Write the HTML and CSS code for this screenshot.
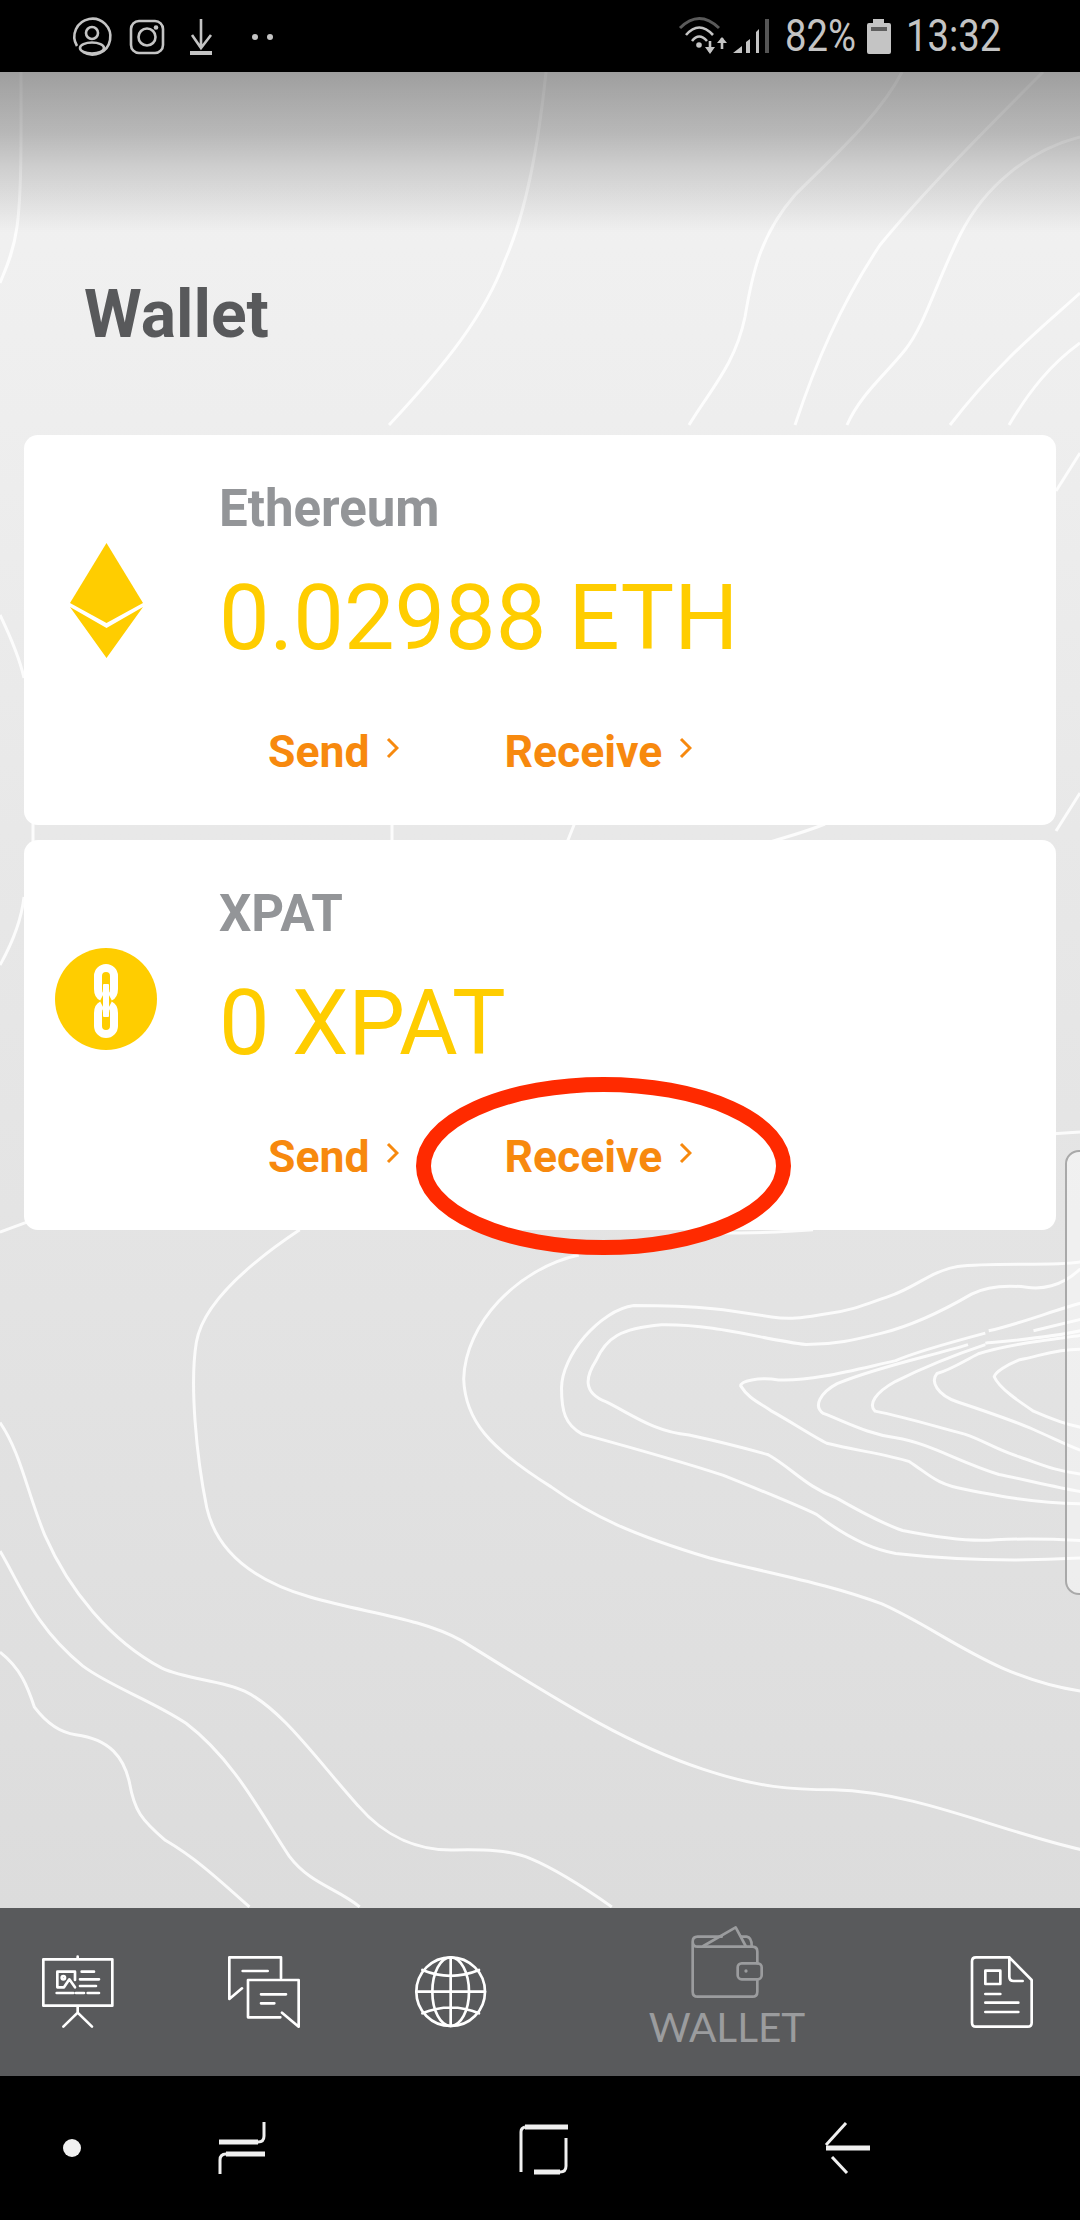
FILE: index.html
```html
<!DOCTYPE html>
<html lang="en">
<head>
    <meta charset="UTF-8">
    <title>Wallet</title>
    <link rel="stylesheet" href="styles.css">
</head>
<body>
<div class="phone">

    <!-- status bar -->
    <div class="status-bar">
        <svg class="status-left" viewBox="0 0 280 72" width="280" height="72">
            <g class="st-line">
                <path d="M77 46 A18 18 0 1 1 83 52"/>
                <circle cx="92" cy="33" r="6"/>
                <ellipse cx="92" cy="48" rx="12" ry="5.5"/>
                <rect x="131" y="21" width="32" height="32" rx="8"/>
                <circle cx="147" cy="37" r="8.5"/>
                <path d="M201 19 V48 M192 35 L201 48 L211 35"/>
            </g>
            <g class="st-fill">
                <circle cx="156" cy="27.500" r="2.300"/>
                <rect x="190" y="51" width="22" height="4"/>
                <circle cx="255" cy="37" r="3"/>
                <circle cx="270" cy="37" r="3"/>
            </g>
        </svg>
        <div class="status-right">
            <svg viewBox="0 0 100 72" width="100" height="72">
                <path class="st-dim" d="M20 28 Q39 9 59 28"/>
                <path class="st-line" d="M26 35 Q39 20 53 35 M32 41 Q39 32 47 41"/>
                <circle class="st-fill" cx="39" cy="45" r="2.800"/>
                <path class="st-line" d="M50 41 V52 M62 49 V38"/>
                <path class="st-fill" d="M45 47 H55 L50 54 Z M57 43 L62 37 L67 43 Z"/>
                <path class="st-fill" d="M73 53 L82 46 V53 Z M86 42 L90 39 V53 H86 Z M96 32 L99 29 V53 H96 Z"/>
            </svg>
            <span class="signal-end"></span>
            <span class="status-text pct">82%</span>
            <svg class="battery" viewBox="0 0 24 35" width="24" height="35">
                <path class="st-fill" d="M6 0 H17 V4 H22 Q24 4 24 6 V33 Q24 35 22 35 H2 Q0 35 0 33 V6 Q0 4 2 4 H6 Z"/>
                <rect class="battery-band" x="4" y="8" width="16" height="4"/>
            </svg>
            <span class="status-text clock">13:32</span>
        </div>
    </div>

    <div class="content">
        <!-- topographic lines behind everything -->
        <svg class="topo" viewBox="0 72 1080 1836" width="1080" height="1836">
            <path d="M21 72 C21 130 22 190 17 227 C13 255 5 270 0 283"/>
            <path d="M546 72 C538 150 525 215 505 260 C485 315 445 365 389 425"/>
            <path d="M902 72 C880 115 835 155 795 195 C760 235 752 275 745 317 C735 365 710 390 689 425"/>
            <path d="M1043 72 C990 125 925 190 880 245 C840 305 815 365 795 425"/>
            <path d="M1080 137 C1030 150 985 185 960 235 C935 285 925 325 905 350 C885 375 860 395 847 425"/>
            <path d="M1080 293 C1045 325 1000 360 950 425"/>
            <path d="M1080 343 C1050 365 1030 390 1009 425"/>
            <path d="M1080 453 L1056 491"/>
            <path d="M1080 793 L1056 831"/>
            <path d="M0 615 C12 640 20 660 24 678"/>
            <path d="M33 820 V845"/>
            <path d="M392 820 V845"/>
            <path d="M576 820 L566 845"/>
            <path d="M825 824 C805 832 790 836 770 842"/>
            <path d="M24 897 C22 915 14 940 0 965"/>
            <path d="M1080 1132 L1050 1134"/>
            <g transform="translate(0 1200) scale(.689 .459)">
                <path d="M0 70 L45 45"/>
                <path d="M1040 72 C1100 72 1140 70 1180 65"/>
                <path d="M435 65 C370 130 295 220 285 310 C275 400 285 560 300 670 C315 770 370 830 450 865 C530 900 610 910 670 960 C800 1080 900 1180 1020 1240 C1100 1280 1150 1285 1210 1285 C1330 1290 1440 1370 1568 1415"/>
                <path d="M840 120 C750 150 675 270 673 390 C675 480 710 540 800 625 C860 690 920 730 1030 780 C1120 815 1200 835 1280 880 C1370 940 1440 1040 1568 1070"/>
                <path d="M1568 135 C1530 145 1440 135 1390 145 C1350 155 1330 190 1290 210 C1260 225 1240 240 1200 248 C1170 255 1150 262 1120 255 C1060 240 1020 230 920 230 C870 240 815 340 815 410 C815 460 820 490 845 510 C930 545 1000 575 1050 600 C1100 630 1150 660 1185 685 C1220 725 1260 760 1300 770 C1360 780 1450 790 1568 780"/>
                <path d="M1568 150 C1540 190 1510 195 1490 190 C1460 185 1430 190 1410 205 C1370 240 1320 275 1280 290 C1240 305 1210 315 1170 315 C1110 305 1040 270 960 272 C900 280 880 300 865 350 C850 385 845 420 880 440 C920 470 950 505 1000 512 C1040 525 1080 540 1115 555 C1150 585 1170 625 1215 650 C1250 680 1290 710 1310 720 C1360 735 1410 745 1445 740 C1480 738 1520 738 1568 742"/>
                <path d="M1430 290 C1380 310 1330 330 1300 350 C1240 370 1180 395 1130 392 C1100 385 1075 395 1075 405 C1085 430 1100 440 1120 460 C1150 485 1180 515 1200 530 C1240 545 1290 555 1320 570 C1350 600 1360 620 1400 630 C1450 645 1500 660 1568 662"/>
                <path d="M1405 315 C1350 340 1270 365 1215 400 C1190 420 1180 450 1195 465 C1230 485 1260 510 1300 518 C1350 530 1390 570 1450 598 C1490 610 1530 625 1568 635"/>
                <path d="M1430 315 C1380 340 1340 365 1300 395 C1270 420 1260 445 1270 460 C1320 475 1360 495 1400 510 C1430 525 1440 540 1480 560 C1510 575 1530 590 1568 597"/>
                <path d="M1568 295 C1520 305 1460 315 1420 335 C1400 350 1380 370 1360 378 C1350 395 1360 425 1390 440 C1430 460 1470 480 1500 500 C1530 520 1550 535 1568 545"/>
                <path d="M1568 325 C1530 325 1510 340 1480 348 C1460 360 1445 375 1443 385 C1450 410 1480 440 1500 460 C1530 480 1550 490 1568 495"/>
                <path d="M1500 285 L1568 260 M1435 285 C1480 270 1530 240 1568 225 M1430 312 C1480 305 1520 300 1568 285"/>
                <path d="M0 485 C30 550 40 640 65 730 C100 850 160 960 235 1020 C270 1045 320 1045 355 1070 C410 1110 460 1220 520 1320 C560 1390 610 1418 660 1416 C700 1415 740 1415 770 1435 C810 1460 850 1500 888 1540"/>
                <path d="M0 765 C30 840 50 930 120 1015 C160 1060 220 1090 270 1140 C340 1220 380 1340 420 1430 C450 1490 490 1500 522 1540"/>
                <path d="M0 985 C30 1020 40 1060 50 1105 C65 1135 85 1160 110 1165 C160 1175 180 1215 188 1270 C195 1330 205 1350 240 1395 C280 1430 310 1470 362 1540"/>
            </g>
        </svg>
        <div class="top-shade"></div>

        <div class="edge-handle"></div>

        <h1 class="page-title">Wallet</h1>

        <div class="cards">
            <div class="card">
                <div class="coin">
                    <svg viewBox="0 0 73 115" width="73" height="115">
                        <path class="coin-fill" d="M36.500 0 L73 60 L36.500 80 L0 60 Z"/>
                        <path class="coin-fill" d="M0 64 L36.500 85 L73 64 L36.500 115 Z"/>
                    </svg>
                </div>
                <div class="info">
                    <div class="coin-name">Ethereum</div>
                    <div class="amount">0.02988 ETH</div>
                    <div class="actions">
                        <a class="action action-send">Send
                            <svg class="chevron" viewBox="0 0 13 22" width="13" height="22"><path d="M2 2 L11 11 L2 20"/></svg>
                        </a>
                        <a class="action">Receive
                            <svg class="chevron" viewBox="0 0 13 22" width="13" height="22"><path d="M2 2 L11 11 L2 20"/></svg>
                        </a>
                    </div>
                </div>
            </div>

            <div class="card">
                <div class="coin">
                    <svg viewBox="0 0 102 102" width="102" height="102">
                        <circle class="coin-fill" cx="51" cy="51" r="51"/>
                        <path class="chain" d="M47 49 Q43 47 43 41 V28 A8 8 0 0 1 59 28 V41 Q59 47 55 49"/>
                        <path class="chain" d="M47 57 Q43 59 43 65 V78 A8 8 0 0 0 59 78 V65 Q59 59 55 57"/>
                        <rect class="chain-bar" x="48" y="36" width="6" height="33" rx="1"/>
                    </svg>
                </div>
                <div class="info">
                    <div class="coin-name">XPAT</div>
                    <div class="amount">0 XPAT</div>
                    <div class="actions">
                        <a class="action action-send">Send
                            <svg class="chevron" viewBox="0 0 13 22" width="13" height="22"><path d="M2 2 L11 11 L2 20"/></svg>
                        </a>
                        <a class="action">Receive
                            <svg class="chevron" viewBox="0 0 13 22" width="13" height="22"><path d="M2 2 L11 11 L2 20"/></svg>
                        </a>
                    </div>
                </div>
                <!-- red marker drawn over the screenshot -->
                <svg class="marker" viewBox="0 0 375 178" width="375" height="178">
                    <ellipse cx="187.500" cy="89" rx="180" ry="81.500"/>
                </svg>
            </div>
        </div>
    </div>

    <!-- app tab bar -->
    <div class="tab-bar">
        <svg class="tab-icon" viewBox="60 165 225 225" width="75" height="75">
            <path d="M173 170 V178 M70 178 H277 V317 H70 Z M173 317 V338 M130 380 L173 338 L216 380"/>
            <path d="M112 262 V215 H165 V240 M112 262 H132 L148 238 L165 262"/>
            <circle cx="130" cy="233" r="5"/>
            <path d="M185 215 H222 M180 238 H237 M180 258 H228 M110 279 H160 M168 279 H192 M203 279 H237"/>
        </svg>
        <svg class="tab-icon" viewBox="620 165 225 225" width="75" height="75">
            <path d="M782 235 V172 H627 V297 L665 265"/>
            <path d="M780 352 H683 V240 H835 V380 L785 338"/>
            <path d="M667 213 H742 M722 283 H797 M722 310 H762"/>
        </svg>
        <svg class="tab-icon" viewBox="1180 165 225 225" width="75" height="75">
            <circle cx="1290" cy="275" r="103"/>
            <ellipse cx="1290" cy="275" rx="55" ry="103"/>
            <path d="M1290 172 V378 M1187 275 H1393 M1205 210 Q1290 245 1375 210 M1205 340 Q1290 305 1375 340"/>
        </svg>
        <div class="tab-active">
            <svg class="tab-icon tab-icon-active" viewBox="205 75 225 225" width="75" height="75">
                <path d="M407 190 V155 Q407 140 392 140 H228 Q213 140 213 125 Q213 110 228 110 H300 M213 125 V275 Q213 290 228 290 H392 Q407 290 407 275 V240"/>
                <path d="M245 138 L342 82 L372 138 M360 110 H375 Q390 112 390 138"/>
                <rect x="348" y="190" width="72" height="48" rx="12"/>
                <circle class="wallet-dot" cx="373" cy="213" r="5"/>
            </svg>
            <span class="tab-label">WALLET</span>
        </div>
        <svg class="tab-icon" viewBox="1035 165 225 225" width="75" height="75">
            <path d="M1165 172 H1065 Q1053 172 1053 184 V368 Q1053 380 1065 380 H1220 Q1232 380 1232 368 V240 L1165 172 V230 Q1165 243 1178 243 H1205"/>
            <rect x="1093" y="212" width="45" height="40"/>
            <path d="M1093 282 H1138 M1093 308 H1192 M1093 336 H1192"/>
        </svg>
    </div>

    <!-- android nav bar -->
    <div class="nav-bar">
        <svg viewBox="0 0 1080 144" width="1080" height="144">
            <circle class="nav-dot" cx="72" cy="72" r="9"/>
            <g class="nav-thin">
                <path d="M264 46 V60 Q264 66 258 66"/>
                <path d="M220 98 V84 Q220 78 226 78"/>
                <path d="M521 96 V56 Q521 52 525 51"/>
                <path d="M566 62 V90 Q566 96 560 96"/>
                <path d="M846 47 L826 69"/>
                <path d="M832 81 L847 97"/>
            </g>
            <g class="nav-thick">
                <path d="M219 66 H258"/>
                <path d="M226 78 H265"/>
                <path d="M525 51 H568"/>
                <path d="M534 96 H560"/>
                <path d="M826 72 H870"/>
            </g>
        </svg>
    </div>
</div>
</body>
</html>
```
FILE: styles.css
```css
body {
    margin: 0;
    font-family: Roboto, "Liberation Sans", sans-serif;
}

.phone {
    width: 1080px;
    height: 2220px;
    display: flex;
    flex-direction: column;
    overflow: hidden;
}

/* status bar */
.status-bar {
    height: 72px;
    background-color: #000;
    display: flex;
    align-items: center;
    justify-content: space-between;
    flex-shrink: 0;
}

.status-left {
    display: block;
}

.status-right {
    width: 380px;
    margin-right: 40px;
    height: 72px;
    position: relative;
    display: flex;
    align-items: center;
}

.signal-end {
    width: 4px;
    height: 34px;
    background-color: #555;
    position: absolute;
    left: 105px;
    top: 19px;
}

.status-text {
    font-size: 45px;
    color: #c4c4c4;
    transform: scaleX(.85);
    transform-origin: left center;
    line-height: 72px;
}

.pct {
    width: 82px;
    margin-left: 25px;
}

.battery {
    margin-top: 1px;
}

.clock {
    margin-left: 15px;
}

.st-line,
.st-line * {
    fill: none;
    stroke: #c4c4c4;
    stroke-width: 2.6;
}

.st-dim {
    fill: none;
    stroke: #5a5a5a;
    stroke-width: 3;
}

.st-fill,
.st-fill * {
    fill: #c4c4c4;
}

.battery-band {
    fill: #5f5f5f;
}

/* main area */
.content {
    flex: 1;
    position: relative;
    padding: 0 24px;
    background: linear-gradient(to bottom, #f2f2f2 0, #eeeeee 348px, #e8e8e8 758px, #e2e2e2 1328px, #dcdcdc 1836px);
}

.topo {
    position: absolute;
    left: 0;
    top: 0;
}

.topo path {
    fill: none;
    stroke: #fff;
    stroke-width: 3;
    stroke-opacity: .85;
    vector-effect: non-scaling-stroke;
}

/* dark fade under the status bar, it dims the lines too */
.top-shade {
    position: absolute;
    left: 0;
    top: 0;
    width: 1080px;
    height: 161px;
    background: linear-gradient(to bottom, rgba(0, 0, 0, .347) 0, rgba(0, 0, 0, .24) 61px, rgba(0, 0, 0, .145) 95px, rgba(0, 0, 0, .074) 128px, rgba(0, 0, 0, 0) 161px);
}

.edge-handle {
    position: absolute;
    left: 1065px;
    top: 1078px;
    width: 30px;
    height: 445px;
    box-sizing: border-box;
    background-color: rgba(255, 255, 255, .45);
    border: 2px solid #a9a9a9;
    border-radius: 14px;
}

.page-title {
    position: relative;
    margin: 0;
    padding: 204px 0 0 60px;
    height: 159px;
    font-size: 66px;
    line-height: 78px;
    font-weight: 700;
    color: #58595b;
}

.cards {
    position: relative;
    display: flex;
    flex-direction: column;
    gap: 15px;
}

.card {
    position: relative;
    height: 390px;
    display: flex;
    background-color: #fff;
    border-radius: 14px;
}

.coin {
    width: 164px;
    margin-right: 31px;
    padding-top: 108px;
    display: flex;
    justify-content: center;
    align-items: flex-start;
}

.coin svg {
    display: block;
}

.coin-fill {
    fill: #ffcd00;
}

.chain {
    fill: none;
    stroke: #fff;
    stroke-width: 8;
}

.chain-bar {
    fill: #fff;
}

.coin-name {
    margin-top: 45px;
    font-size: 51px;
    line-height: 58px;
    font-weight: 700;
    color: #939598;
}

.amount {
    margin-top: 28px;
    font-size: 90px;
    line-height: 106px;
    font-weight: 400;
    color: #ffcd00;
}

.actions {
    margin-top: 53px;
    padding-left: 49px;
    display: flex;
}

.action {
    display: flex;
    align-items: center;
    gap: 17px;
    font-size: 44.500px;
    line-height: 54px;
    font-weight: 700;
    color: #f7890e;
}

.action-send {
    margin-right: 105px;
}

.chevron {
    margin-top: -8px;
}

.chevron path {
    fill: none;
    stroke: #f7890e;
    stroke-width: 3;
}

.marker {
    position: absolute;
    left: 392px;
    top: 237px;
}

.marker ellipse {
    fill: none;
    stroke: #ff2a00;
    stroke-width: 15;
}

/* tab bar */
.tab-bar {
    height: 168px;
    background-color: #595a5c;
    display: grid;
    grid-template-columns: 187px 187px 233px 319px 70px;
    padding-left: 40px;
    flex-shrink: 0;
    align-items: start;
}

.tab-icon {
    display: block;
    margin-top: 47px;
}

.tab-icon path,
.tab-icon rect,
.tab-icon circle,
.tab-icon ellipse {
    fill: none;
    stroke: #fff;
    stroke-width: 8;
    stroke-linecap: round;
    stroke-linejoin: round;
}

.tab-active {
    display: flex;
    flex-direction: column;
    align-items: center;
    width: 156px;
    margin-left: 2px;
}

.tab-icon-active {
    margin-top: 17px;
}

.tab-icon-active path,
.tab-icon-active rect,
.tab-icon-active circle {
    stroke: #9b9c9e;
}

.tab-icon-active .wallet-dot {
    fill: #9b9c9e;
    stroke: none;
}

.tab-label {
    font-family: Lato, "Open Sans", sans-serif;
    font-weight: 400;
    font-size: 40.500px;
    line-height: 46px;
    color: #9b9c9e;
    margin-top: 4px;
}

/* android nav */
.nav-bar {
    height: 144px;
    background-color: #000;
    flex-shrink: 0;
}

.nav-bar svg {
    display: block;
}

.nav-dot {
    fill: #f0f0f0;
}

.nav-thin path {
    fill: none;
    stroke: #f0f0f0;
    stroke-width: 3;
}

.nav-thick path {
    fill: none;
    stroke: #f0f0f0;
    stroke-width: 5;
}
```
